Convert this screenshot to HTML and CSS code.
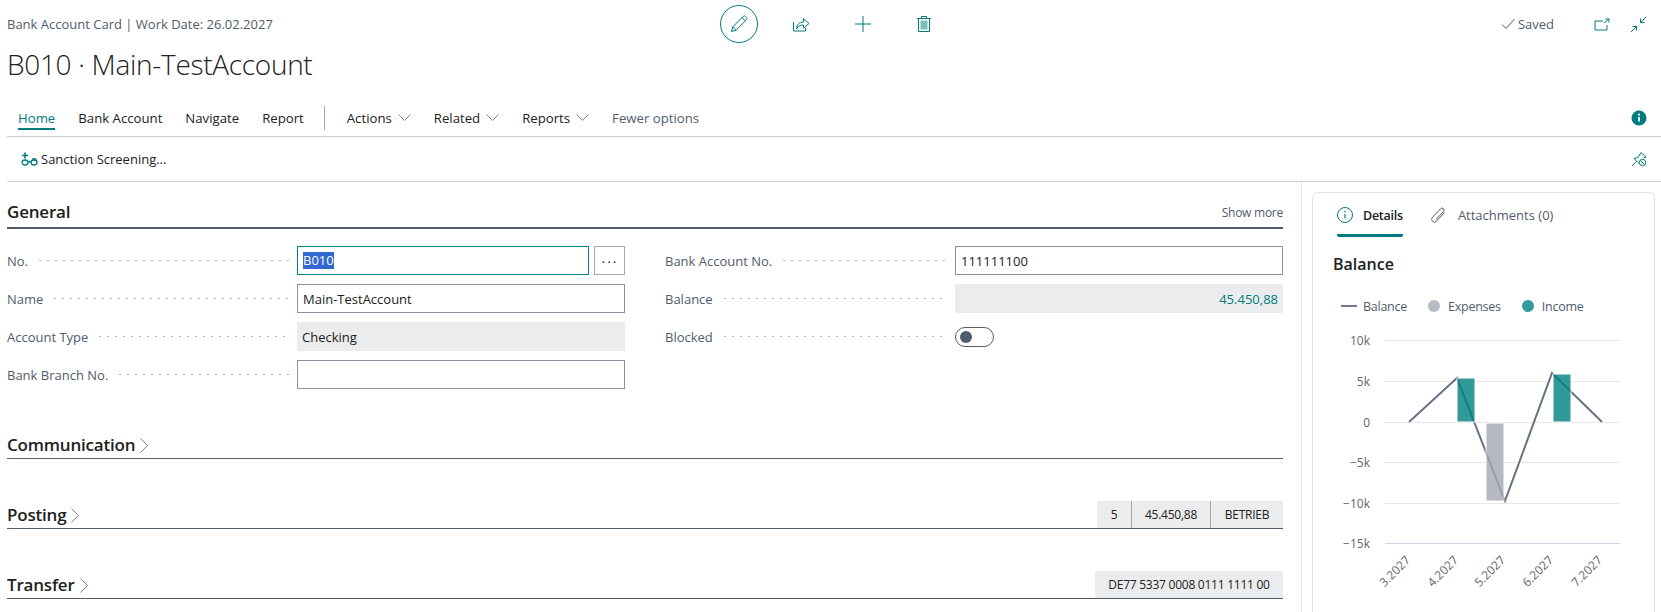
FILE: index.html
```html
<!DOCTYPE html>
<html lang="en">
<head>
  <meta charset="UTF-8">
  <meta name="viewport" content="width=device-width, initial-scale=1.0">
  <title>Bank Account Card</title>
  <link rel="stylesheet" href="styles.css">
</head>
<body>
<div class="topbar">
  <div class="caption">Bank Account Card | Work Date: 26.02.2027</div>
  <div class="top-actions">
    <button class="edit-btn">
      <svg width="20" height="20" viewBox="0 0 20 20" class="ico"><path d="M2.500 17.500l1.200-4.600L14.200 2.400a1.600 1.600 0 0 1 2.300 0l1 1a1.600 1.600 0 0 1 0 2.300L7 16.200z"/><path d="M3.700 12.900l3.300 3.300M13 3.600l3.300 3.300"/></svg>
    </button>
    <svg width="18" height="18" viewBox="0 0 18 18" class="ico"><path d="M1.500 7v9h12v-3"/><path d="M4.500 14c.3-4.500 3-7 7-7V3.500L17 8.500l-5.500 4.500V10c-3 0-5.500 1-7 4z"/></svg>
    <svg width="18" height="18" viewBox="0 0 18 18" class="ico"><path d="M9 1v16M1 9h16"/></svg>
    <svg width="16" height="18" viewBox="0 0 16 18" class="ico"><path d="M1 3.500h14M5.500 3.500V1.500h5v2M2.500 3.500v13h11v-13"/><rect x="4.500" y="5.500" width="7" height="9" class="ico-fill"/></svg>
  </div>
  <div class="top-right">
    <span class="saved">
      <svg width="14" height="12" viewBox="0 0 14 12" class="ico-gray"><path d="M1 6.500l4 4L13.500 1"/></svg>
      Saved
    </span>
    <svg width="16" height="13" viewBox="0 0 16 13" class="ico"><path d="M9 3H1v9h12V7M10 5l5-4M11.500 1H15v3.500"/></svg>
    <svg width="17" height="17" viewBox="0 0 17 17" class="ico"><path d="M16 1l-5.500 5.500M10.500 2.500v4h4M1 16l5.500-5.500M2.500 10.500h4v4"/></svg>
  </div>
</div>

<h1 class="page-title">B010 · Main-TestAccount</h1>

<div class="navbar">
  <a class="nav-item active">Home</a>
  <a class="nav-item">Bank Account</a>
  <a class="nav-item">Navigate</a>
  <a class="nav-item">Report</a>
  <span class="nav-sep"></span>
  <a class="nav-item">Actions <svg width="13" height="7" viewBox="0 0 13 7" class="chev"><path d="M.5.500l6 6 6-6"/></svg></a>
  <a class="nav-item">Related <svg width="13" height="7" viewBox="0 0 13 7" class="chev"><path d="M.5.500l6 6 6-6"/></svg></a>
  <a class="nav-item">Reports <svg width="13" height="7" viewBox="0 0 13 7" class="chev"><path d="M.5.500l6 6 6-6"/></svg></a>
  <a class="nav-item muted">Fewer options</a>
  <svg class="info-badge" width="16" height="16" viewBox="0 0 16 16"><circle cx="8" cy="8" r="7.500" fill="#007b7f"/><path d="M8 7v4.500" stroke="#fff" stroke-width="1.800"/><circle cx="8" cy="4.700" r="1.100" fill="#fff"/></svg>
</div>

<div class="actionbar">
  <span class="action">
    <svg width="17" height="14" viewBox="0 0 17 14" class="ico glasses"><path d="M4 .5v6M1 3.500h6" stroke-width="1.600"/><ellipse cx="4" cy="10.500" rx="3" ry="2.500"/><ellipse cx="13" cy="10.500" rx="3" ry="2.500"/><path d="M7 10c1-.7 2-.7 3 0M11 7h3.500l1.500 2.500"/></svg>
    Sanction Screening...
  </span>
  <svg width="16" height="16" viewBox="0 0 16 16" class="ico"><path d="M1 15l4.500-4.500M3 7.500l5.500 5.500M3 7.500l4-1 3-5 5 4.500-2.500 1"/><circle cx="11.500" cy="11.500" r="3.200"/><path d="M9.300 9.300l4.400 4.400"/></svg>
</div>

<div class="content">
  <div class="main">
    <section class="section">
      <div class="section-head">
        <h2>General</h2>
        <span class="show-more">Show more</span>
      </div>
      <div class="fields">
        <div class="col">
          <div class="row">
            <label>No.</label>
            <div class="with-lookup">
              <div class="input focused"><span class="selected">B010</span></div>
              <button class="lookup">···</button>
            </div>
          </div>
          <div class="row"><label>Name</label><div class="input">Main-TestAccount</div></div>
          <div class="row"><label>Account Type</label><div class="input readonly">Checking</div></div>
          <div class="row"><label>Bank Branch No.</label><div class="input"></div></div>
        </div>
        <div class="col">
          <div class="row"><label>Bank Account No.</label><div class="input">111111100</div></div>
          <div class="row"><label>Balance</label><div class="input readonly amount">45.450,88</div></div>
          <div class="row"><label>Blocked</label><div class="toggle"><span class="knob"></span></div></div>
        </div>
      </div>
    </section>

    <section class="section collapsed">
      <div class="section-head thin">
        <h2>Communication <svg width="8" height="15" viewBox="0 0 8 15" class="chev"><path d="M.5.500l7 7-7 7"/></svg></h2>
      </div>
    </section>

    <section class="section collapsed">
      <div class="section-head thin">
        <h2>Posting <svg width="8" height="15" viewBox="0 0 8 15" class="chev"><path d="M.5.500l7 7-7 7"/></svg></h2>
        <div class="chips">
          <span class="chip narrow">5</span>
          <span class="chip mid">45.450,88</span>
          <span class="chip">BETRIEB</span>
        </div>
      </div>
    </section>

    <section class="section collapsed">
      <div class="section-head thin">
        <h2>Transfer <svg width="8" height="15" viewBox="0 0 8 15" class="chev"><path d="M.5.500l7 7-7 7"/></svg></h2>
        <div class="chips">
          <span class="chip wide">DE77 5337 0008 0111 1111 00</span>
        </div>
      </div>
    </section>
  </div>

  <aside class="factbox">
    <div class="tabs">
      <span class="tab active">
        <svg width="16" height="16" viewBox="0 0 16 16" class="ico"><circle cx="8" cy="8" r="7.500"/><path d="M8 7v4.500" stroke-width="1.200"/><path d="M8 4v1.300" stroke-width="1.400"/></svg>
        Details
      </span>
      <span class="tab">
        <svg width="16" height="17" viewBox="0 0 16 17" class="ico-clip"><path d="M14.500 5.500L6.500 14.200a2.800 2.800 0 0 1-4.200-3.700L10.500 1.800a2 2 0 0 1 3 2.700L6 12.500"/></svg>
        Attachments (0)
      </span>
    </div>
    <h3>Balance</h3>
    <div class="legend">
      <span class="legend-item"><i class="mark-line"></i>Balance</span>
      <span class="legend-item"><i class="mark-dot gray"></i>Expenses</span>
      <span class="legend-item"><i class="mark-dot teal"></i>Income</span>
    </div>
    <svg class="chart" width="300" height="282" viewBox="1320 330 300 282">
      <g class="grid">
        <path d="M1385 340.500H1620M1385 381.500H1620M1385 422.500H1620M1385 462.500H1620M1385 503.500H1620"/>
        <path class="axis" d="M1385 543.500H1620"/>
      </g>
      <g class="ylabels">
        <text x="1370" y="345">10k</text>
        <text x="1370" y="386">5k</text>
        <text x="1370" y="427">0</text>
        <text x="1370" y="467">−5k</text>
        <text x="1370" y="508">−10k</text>
        <text x="1370" y="548">−15k</text>
      </g>
      <path class="halo" d="M1409 422L1457 378L1505 501L1552 373L1602 422"/>
      <path class="line" d="M1409 422L1457 378L1505 501L1552 373L1602 422"/>
      <rect class="bar teal-bar" x="1457" y="378" width="18" height="44"/>
      <rect class="bar gray-bar" x="1486" y="423" width="18" height="78"/>
      <rect class="bar teal-bar" x="1553" y="374" width="18" height="48"/>
      <g class="xlabels">
        <text transform="translate(1411 561) rotate(-45)">3.2027</text>
        <text transform="translate(1459 561) rotate(-45)">4.2027</text>
        <text transform="translate(1506 561) rotate(-45)">5.2027</text>
        <text transform="translate(1554 561) rotate(-45)">6.2027</text>
        <text transform="translate(1603 561) rotate(-45)">7.2027</text>
      </g>
    </svg>
  </aside>
</div>
</body>
</html>
```

FILE: styles.css
```css
* {
  box-sizing: border-box;
}

html, body {
  height: 100%;
}

body {
  margin: 0;
  height: 612px;
  overflow: hidden;
  background-color: white;
  color: #212121;
  font-family: "Open Sans", "Noto Sans", sans-serif;
  font-size: 13px;
  display: flex;
  flex-direction: column;
}

.ico, .ico-clip, .ico-gray, .chev {
  fill: none;
  stroke-width: 1;
}

.ico {
  stroke: #007b7f;
}

.ico-clip {
  stroke: #505c6d;
  margin-right: 2px;
}

.ico-gray {
  stroke: #505c6d;
}

.chev {
  stroke: #7a8492;
}

.ico-fill {
  fill: #7fbdbf;
  stroke: none;
}

.glasses {
  stroke-width: 1.300;
}

/* top bar */
.topbar {
  height: 48px;
  padding: 0 14px 0 7px;
  display: grid;
  grid-template-columns: 1fr auto 1fr;
  align-items: center;
}

.caption {
  color: #505c6d;
}

.top-actions {
  display: flex;
  align-items: center;
  gap: 44px;
  margin-left: -2px;
}

.edit-btn {
  width: 38px;
  height: 38px;
  margin-right: -10px;
  border: 1px solid #007b7f;
  border-radius: 50%;
  background-color: white;
  padding: 0;
  display: flex;
  align-items: center;
  justify-content: center;
}

.top-right {
  display: flex;
  justify-content: flex-end;
  align-items: center;
  gap: 20px;
}

.saved {
  color: #505c6d;
  display: flex;
  align-items: center;
  gap: 3px;
  margin-right: 20px;
}

.page-title {
  margin: 0;
  padding-left: 7px;
  height: 53px;
  font-size: 28px;
  line-height: 32px;
  font-weight: 300;
  letter-spacing: -0.3px;
}

/* tabs row */
.navbar {
  margin-left: 7px;
  height: 36px;
  padding: 0 14px 2px 11px;
  border-bottom: 1px solid #d0d0d0;
  display: flex;
  align-items: center;
  gap: 23px;
  font-size: 13.200px;
}

.nav-item {
  display: flex;
  align-items: center;
  gap: 6px;
  height: 20px;
  color: #212121;
}

.nav-item.active {
  color: #007b7f;
  border-bottom: 2px solid #007b7f;
  height: 22px;
  margin-top: 2px;
}

.nav-item.muted {
  color: #505c6d;
}

.nav-sep {
  width: 1px;
  height: 24px;
  margin: 0 -1px 0 -3px;
  background-color: #a8a8a8;
}

.info-badge {
  margin-left: auto;
}

.actionbar {
  margin-left: 7px;
  height: 45px;
  padding: 0 14px;
  border-bottom: 1px solid #d0d0d0;
  display: flex;
  align-items: center;
  justify-content: space-between;
}

.action {
  display: flex;
  align-items: center;
  gap: 3px;
}

/* page body */
.content {
  flex: 1;
  min-height: 0;
  display: flex;
}

.main {
  width: 1302px;
  padding: 7px 18px 0 7px;
  border-right: 1px solid #e6e6e6;
  flex-shrink: 0;
}

.section-head {
  height: 40px;
  padding-bottom: 3px;
  border-bottom: 2px solid #505c6d;
  display: flex;
  align-items: flex-end;
  justify-content: space-between;
}

.section-head.thin {
  height: 30px;
  padding-bottom: 0;
  border-bottom: 1px solid #505c6d;
}

h2 {
  margin: 0;
  font-size: 17px;
  line-height: 24px;
  font-weight: 600;
  letter-spacing: -0.2px;
  display: flex;
  align-items: center;
  gap: 5px;
}

.thin h2 {
  margin-bottom: 1px;
}

.show-more {
  font-size: 12px;
  letter-spacing: -0.25px;
  color: #505c6d;
  margin-bottom: 3px;
}

.fields {
  display: grid;
  grid-template-columns: 618px 618px;
  column-gap: 40px;
  padding-top: 17px;
}

.col {
  display: flex;
  flex-direction: column;
  gap: 9px;
}

.row {
  display: flex;
  height: 29px;
  align-items: center;
}

.row label {
  width: 290px;
  color: #505c6d;
  display: flex;
  align-items: center;
  gap: 8px;
  white-space: nowrap;
}

.row label::after {
  content: "";
  flex: 1;
  height: 3px;
  margin-right: 8px;
  background-image: radial-gradient(circle, #b4b4b4 0.8px, transparent 1px);
  background-size: 8px 3px;
  background-repeat: repeat-x;
}

.input {
  flex: 1;
  height: 29px;
  border: 1px solid #8a919e;
  padding: 0 5px;
  display: flex;
  align-items: center;
}

.input.focused {
  border-color: #008489;
}

.input.readonly {
  border: 0;
  background-color: #ebecee;
}

.input.amount {
  justify-content: flex-end;
  color: #007b7f;
}

.selected {
  background-color: #3367d1;
  color: white;
  line-height: 17px;
}

.with-lookup {
  flex: 1;
  display: flex;
  gap: 5px;
}

.lookup {
  width: 31px;
  height: 29px;
  padding: 0;
  border: 1px solid #a8a8a8;
  background-color: white;
  font-size: 14px;
  letter-spacing: 1px;
  color: #212121;
}

.toggle {
  width: 39px;
  height: 20px;
  border: 1px solid #505c6d;
  border-radius: 10px;
  padding: 3px 4px;
}

.knob {
  display: block;
  width: 12px;
  height: 12px;
  border-radius: 50%;
  background-color: #505c6d;
}

.section.collapsed {
  margin-top: 40px;
}

.chips {
  display: flex;
  height: 27px;
  margin-bottom: 0;
}

.chip {
  background-color: #ebecee;
  display: flex;
  align-items: center;
  justify-content: center;
  width: 72px;
  font-size: 12px;
  letter-spacing: -0.25px;
}

.chip.narrow {
  width: 35px;
  border-right: 1px solid #a8a8a8;
}

.chip.mid {
  width: 79px;
  border-right: 1px solid #a8a8a8;
}

.chip.wide {
  width: 188px;
}

/* factbox */
.factbox {
  margin: 10px 6px 0 10px;
  flex: 1;
  border: 1px solid #e1e1e6;
  border-bottom: 0;
  border-radius: 6px 6px 0 0;
  padding: 0 0 0 21px;
  overflow: hidden;
}

.tabs {
  display: flex;
  gap: 27px;
  margin-left: 3px;
  height: 44px;
  color: #505c6d;
}

.tab {
  display: flex;
  align-items: center;
  gap: 10px;
  height: 44px;
  padding-top: 3px;
  border-bottom: 3px solid transparent;
}

.tab.active {
  color: #212121;
  font-size: 12.500px;
  letter-spacing: -0.25px;
  font-weight: 600;
  border-bottom-color: #007b7f;
  border-radius: 0 0 2px 2px;
}

h3 {
  margin: 0 0 0 -1px;
  padding-top: 16px;
  font-size: 16px;
  line-height: 22px;
  font-weight: 600;
}

.legend {
  display: flex;
  align-items: center;
  gap: 21px;
  margin: 21px 0 0 7px;
  height: 20px;
  font-size: 12.500px;
  letter-spacing: -0.25px;
  color: #505c6d;
}

.legend-item {
  display: flex;
  align-items: center;
  gap: 6px;
}

.mark-line {
  width: 16px;
  height: 2px;
  background-color: #6d7888;
}

.mark-dot {
  width: 12px;
  height: 12px;
  border-radius: 50%;
  margin-right: 2px;
}

.mark-dot.gray {
  background-color: #b6bac3;
}

.mark-dot.teal {
  background-color: #339999;
}

.chart {
  display: block;
  margin: 14px 0 0 -14px;
}

.grid path {
  stroke: #e6e6e6;
  fill: none;
}

.grid .axis {
  stroke: #ccd6eb;
}

.ylabels text {
  text-anchor: end;
  font-size: 12px;
  fill: #666666;
}

.xlabels text {
  text-anchor: end;
  font-size: 12px;
  fill: #666666;
}

.halo {
  fill: none;
  stroke: white;
  stroke-width: 3.500;
}

.line {
  fill: none;
  stroke: #667284;
  stroke-width: 2;
}

.bar {
  opacity: 0.8;
  stroke: white;
  stroke-width: 1;
}

.teal-bar {
  fill: #008080;
}

.gray-bar {
  fill: #a4a8b4;
}
```
